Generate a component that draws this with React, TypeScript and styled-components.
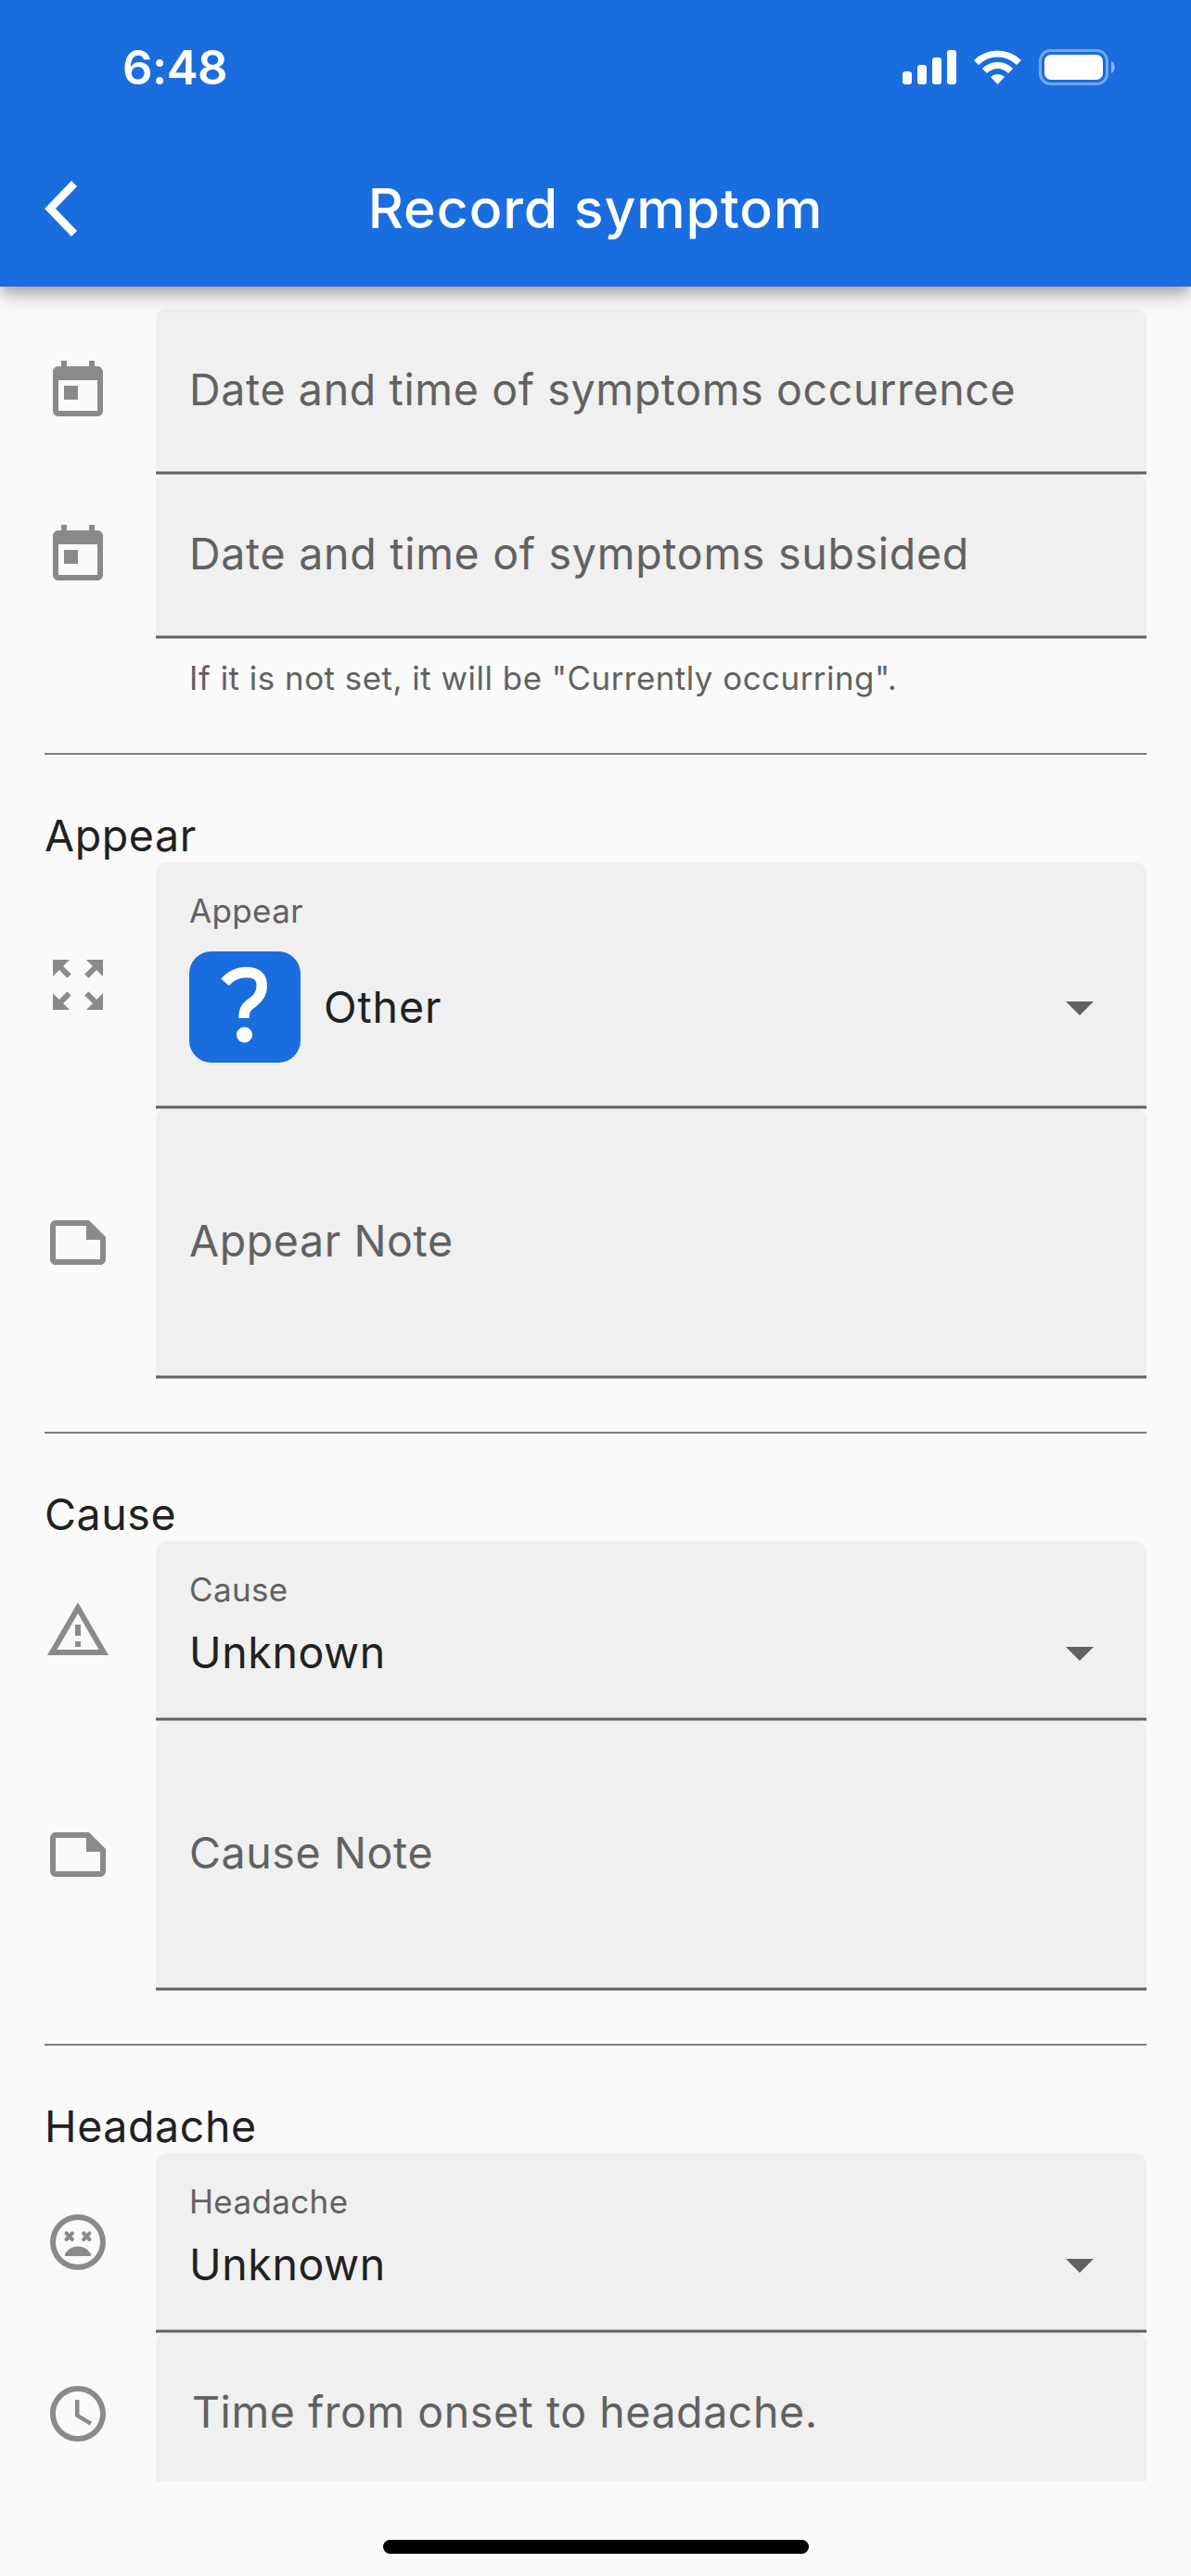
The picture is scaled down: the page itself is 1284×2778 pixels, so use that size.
import React from 'react';
import styled, { createGlobalStyle } from 'styled-components';

const GlobalStyle = createGlobalStyle`
  *, *::after { box-sizing: border-box; }
  body { margin: 0; background: #fafafa; }
`;

const Screen = styled.div`
  width: 1284px;
  height: 2778px;
  display: flex;
  flex-direction: column;
  overflow: hidden;
  background: #fafafa;
  color: #212121;
  font-family: Inter, "Liberation Sans", sans-serif;
`;

const Header = styled.header`
  flex: none;
  height: 309px;
  z-index: 1;
  background: #1a6dde;
  color: #fff;
  box-shadow: 0 6px 12px -3px rgba(0, 0, 0, 0.2), 0 12px 15px rgba(0, 0, 0, 0.14),
    0 3px 30px rgba(0, 0, 0, 0.12);
`;

const StatusBar = styled.div`
  height: 141px;
  display: flex;
  justify-content: space-between;
  padding: 43px 80px 0 132px;
`;

const Clock = styled.span`
  font-size: 51px;
  line-height: 60px;
  font-weight: 600;
  letter-spacing: -0.6px;
`;

const StatusIcons = styled.svg`
  width: 232px;
  height: 40px;
  margin-top: 10px;
`;

const Toolbar = styled.div`
  height: 168px;
  display: grid;
  grid-template-columns: 168px 1fr 168px;
  align-items: center;
`;

const BackIcon = styled.svg`
  width: 36px;
  height: 60px;
  margin-left: 48px;
`;

const Title = styled.h1`
  margin: 0;
  text-align: center;
  font-size: 59px;
  line-height: 72px;
  font-weight: 530;
  letter-spacing: 0.9px;
`;

const Form = styled.main`
  flex: none;
  height: 2367px;
  overflow: hidden;
  padding: 24px 48px 0;
`;

const Row = styled.div<{ $height: number }>`
  height: ${(p) => p.$height}px;
  display: grid;
  grid-template-columns: 120px 1fr;
  align-items: center;
`;

const Glyph = styled.svg`
  width: 72px;
  height: 72px;
  margin-bottom: 1px;
  fill: #8a8a8a;
`;

const Field = styled.div`
  position: relative;
  align-self: stretch;
  display: flex;
  flex-direction: column;
  border-radius: 12px 12px 0 0;
  background: #f0f0f0;
  padding: 0 36px;

  /* Underline straddles the seam between two stacked fields. */
  &::after {
    content: '';
    position: absolute;
    z-index: 1;
    left: 0;
    right: 0;
    bottom: -1px;
    height: 4px;
    border: solid #a6a6a6;
    border-width: 1px 0;
    background: #616161;
  }
`;

const Placeholder = styled.span<{ $spacing?: number; $indent?: number }>`
  margin: auto 0;
  padding: 0 0 5px ${(p) => p.$indent ?? 0}px;
  font-size: 46.5px;
  line-height: 60px;
  letter-spacing: ${(p) => p.$spacing ?? 0.6}px;
  color: #616161;
  white-space: nowrap;
`;

const FieldLabel = styled.span`
  margin-top: 30px;
  font-size: 35px;
  line-height: 45px;
  letter-spacing: 0.35px;
  color: #616161;
`;

const Choice = styled.div<{ $height: number }>`
  height: ${(p) => p.$height}px;
  margin-top: ${(p) => (p.$height > 100 ? 21 : 0)}px;
  display: flex;
  align-items: center;
  font-size: 46.5px;
  letter-spacing: ${(p) => (p.$height > 100 ? 0.9 : 0.6)}px;
`;

const Badge = styled.svg`
  width: 120px;
  height: 120px;
  margin-right: 25px;
`;

const Caret = styled.svg`
  width: 30px;
  height: 15px;
  margin: 2px 21px 0 auto;
  fill: #616161;
`;

const Helper = styled.p`
  margin: 19px 0 0 156px;
  font-size: 34.8px;
  line-height: 48px;
  letter-spacing: 0.54px;
  color: #616161;
`;

const Divider = styled.hr<{ $before: number }>`
  height: 2px;
  margin: ${(p) => p.$before}px 0 0;
  border: 0;
  background: #7e7e7e;
`;

const SectionTitle = styled.h2`
  height: 116px;
  margin: 0;
  padding-top: 57px;
  font-size: 46.5px;
  line-height: 60px;
  font-weight: 400;
  letter-spacing: 0.6px;
`;

const HomeArea = styled.footer`
  flex: 1;
  display: flex;
  justify-content: center;
  padding-top: 63px;
`;

const HomeBar = styled.div`
  width: 459px;
  height: 15px;
  border-radius: 8px;
  background: #000;
`;

const paths = {
  today:
    'M19 3h-1V1h-2v2H8V1H6v2H5c-1.11 0-1.99.9-1.99 2L3 19c0 1.1.89 2 2 2h14c1.1 0 2-.9 2-2V5c0-1.1-.9-2-2-2zm0 16H5V8h14v11zM7 10h5v5H7z',
  expand:
    'M15 3l2.3 2.3-2.89 2.87 1.42 1.42L18.7 6.7 21 9V3zM3 9l2.3-2.3 2.87 2.89 1.42-1.42L6.7 5.3 9 3H3zm6 12l-2.3-2.3 2.89-2.87-1.42-1.42L5.3 17.3 3 15v6zm12-6l-2.3 2.3-2.87-2.89-1.42 1.42 2.89 2.87L15 21h6z',
  note: 'M16 4H4c-1.1 0-2 .9-2 2v12c0 1.1.9 2 2 2h16c1.1 0 2-.9 2-2v-8l-6-6zM4 18V6h11v5h5v7H4z',
  warning:
    'M12 5.99L19.53 19H4.47L12 5.99M12 2L1 21h22L12 2zm1 14h-2v2h2v-2zm0-6h-2v4h2v-4z',
  dizzy:
    'M12 2a10 10 0 1 0 0 20a10 10 0 1 0 0-20zm0 18a8 8 0 1 1 0-16a8 8 0 1 1 0 16zM12 13.5c-2.1 0-3.9 1.2-4.7 2.9-.12.3.08.6.4.6h8.6c.32 0 .52-.3.4-.6-.8-1.7-2.6-2.9-4.7-2.9z',
  clock:
    'M11.99 2C6.47 2 2 6.48 2 12s4.47 10 9.99 10C17.52 22 22 17.52 22 12S17.52 2 11.99 2zM12 20c-4.42 0-8-3.58-8-8s3.58-8 8-8 8 3.58 8 8-3.58 8-8 8zm.5-13H11v6l5.25 3.15.75-1.23-4.5-2.67z',
};

function FormIcon({ name }: { name: keyof typeof paths }) {
  return (
    <Glyph viewBox="0 0 24 24">
      <path d={paths[name]} />
      {name === 'dizzy' && (
        <path
          d="M7.85 8.8l2.1 2.2M9.95 8.8L7.85 11M14.05 8.8l2.1 2.2M16.15 8.8L14.05 11"
          stroke="#8a8a8a"
          strokeWidth="1.35"
          strokeLinecap="round"
        />
      )}
    </Glyph>
  );
}

function TextRow(props: {
  icon: keyof typeof paths;
  text: string;
  height: number;
  indent?: number;
  spacing?: number;
}) {
  return (
    <Row $height={props.height}>
      <FormIcon name={props.icon} />
      <Field>
        <Placeholder $indent={props.indent} $spacing={props.spacing}>
          {props.text}
        </Placeholder>
      </Field>
    </Row>
  );
}

function SelectRow(props: {
  icon: keyof typeof paths;
  label: string;
  value: string;
  height: number;
  badge?: boolean;
}) {
  return (
    <Row $height={props.height}>
      <FormIcon name={props.icon} />
      <Field>
        <FieldLabel>{props.label}</FieldLabel>
        <Choice $height={props.badge ? 120 : 90}>
          {props.badge && (
            <Badge viewBox="0 0 120 120">
              <rect width="120" height="120" rx="24" fill="#1a6dde" />
              <path
                d="M38.500 33.200Q48 22.500 61 22.500Q78.300 22.500 78.300 37C78.300 45 75 50 69 54.500C62 59.500 59 62 59 72"
                fill="none"
                stroke="#fff"
                strokeWidth="11.500"
              />
              <circle cx="59.500" cy="90" r="8.500" fill="#fff" />
            </Badge>
          )}
          {props.value}
          <Caret viewBox="0 0 30 15">
            <path d="M0 0h30L15 15z" />
          </Caret>
        </Choice>
      </Field>
    </Row>
  );
}

export default function App() {
  return (
    <>
      <GlobalStyle />
      <Screen>
        <Header>
          <StatusBar>
            <Clock>6:48</Clock>
            <StatusIcons viewBox="0 0 232 40" fill="#fff">
              <rect x="1" y="24" width="10" height="14" rx="3" />
              <rect x="17" y="17" width="10" height="21" rx="3" />
              <rect x="33" y="9" width="10" height="29" rx="3" />
              <rect x="49" y="1" width="10" height="37" rx="3" />
              <path d="M78 12a36 36 0 0 1 51 0l-5 5a29 29 0 0 0-41 0z" />
              <path d="M87 21a23 23 0 0 1 33 0l-5 5a16 16 0 0 0-23 0z" />
              <path d="M96 30a11 11 0 0 1 15 0l-7.500 8z" />
              <rect x="149.500" y="1.500" width="72" height="36" rx="11" fill="none" stroke="#fff" strokeWidth="3" opacity=".4" />
              <rect x="154" y="6" width="63" height="27" rx="7" />
              <path d="M226 13c5 2 5 11 0 13z" opacity=".5" />
            </StatusIcons>
          </StatusBar>
          <Toolbar>
            <BackIcon viewBox="0 0 36 60">
              <path d="M32 3L6 30l26 27" fill="none" stroke="#fff" strokeWidth="8.500" />
            </BackIcon>
            <Title>Record symptom</Title>
          </Toolbar>
        </Header>
        <Form>
          <TextRow icon="today" text="Date and time of symptoms occurrence" height={178} spacing={0.65} />
          <TextRow icon="today" text="Date and time of symptoms subsided" height={177} spacing={0.72} />
          <Helper>If it is not set, it will be "Currently occurring".</Helper>
          <Divider $before={57} />
          <SectionTitle>Appear</SectionTitle>
          <SelectRow icon="expand" label="Appear" value="Other" height={265} badge />
          <TextRow icon="note" text="Appear Note" height={291} />
          <Divider $before={58} />
          <SectionTitle>Cause</SectionTitle>
          <SelectRow icon="warning" label="Cause" value="Unknown" height={193} />
          <TextRow icon="note" text="Cause Note" height={291} />
          <Divider $before={58} />
          <SectionTitle>Headache</SectionTitle>
          <SelectRow icon="dizzy" label="Headache" value="Unknown" height={193} />
          <TextRow icon="clock" text="Time from onset to headache." height={177} indent={3} spacing={0.55} />
        </Form>
        <HomeArea>
          <HomeBar />
        </HomeArea>
      </Screen>
    </>
  );
}
